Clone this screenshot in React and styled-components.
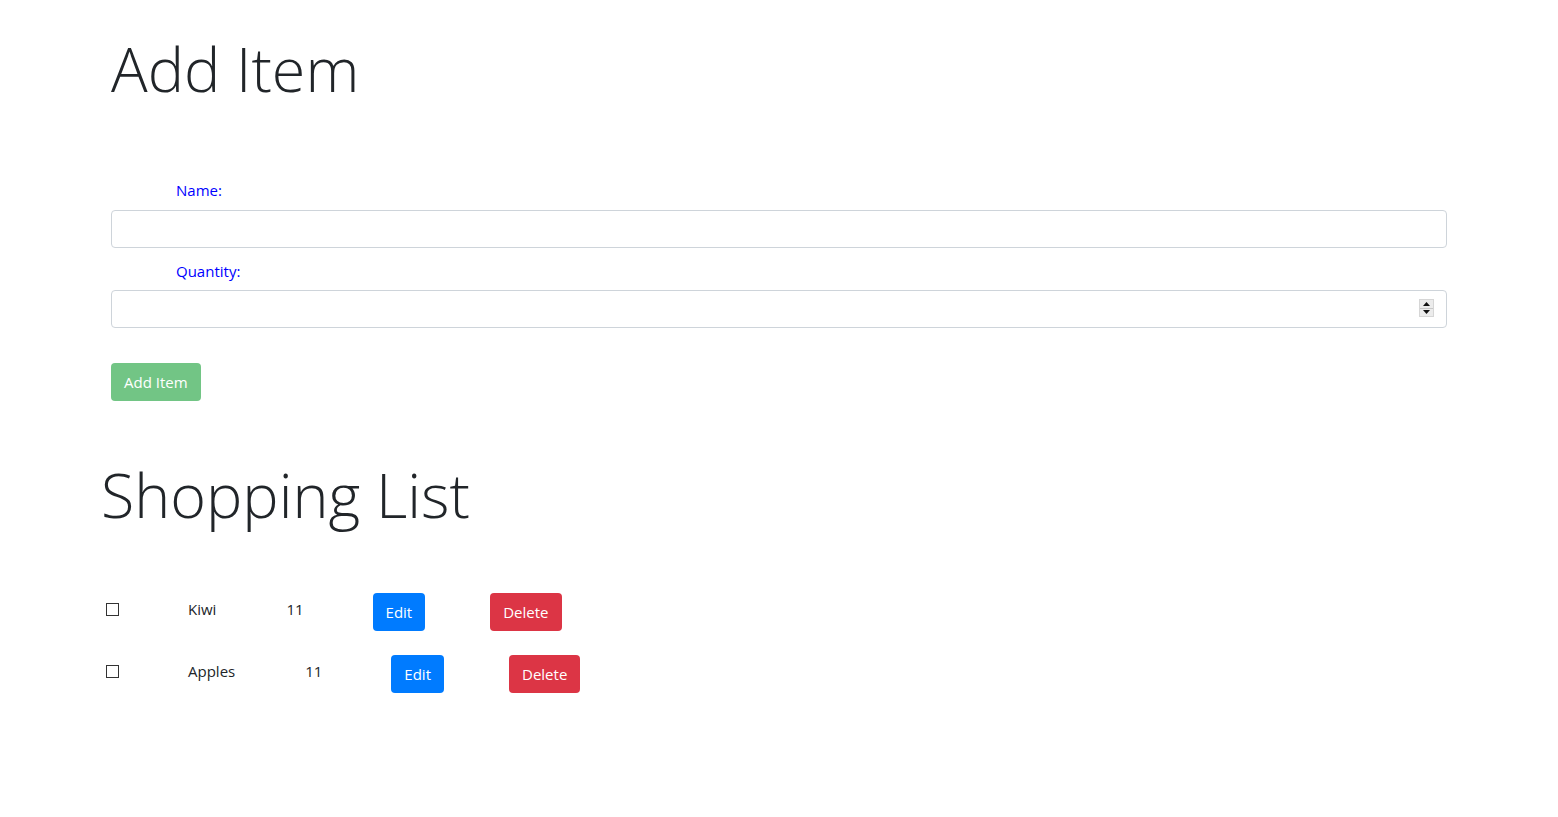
import React, { useState } from "react";
import styled, { createGlobalStyle } from "styled-components";

const GlobalStyle = createGlobalStyle`
  body {
    margin: 0;
    background: #fff;
    color: #212529;
    font-family: "Open Sans", "Noto Sans", "Liberation Sans", sans-serif;
    font-size: 16px;
    line-height: 1.5;
  }
`;

const Page = styled.div`
  width: 1336px;
  margin: 0 auto;
`;

const Title = styled.h1`
  font-size: 61px;
  font-weight: 300;
  line-height: 86px;
  margin: ${(props) => props.$margin || "0"};
`;

const Form = styled.form`
  display: flex;
  flex-direction: column;
  padding-top: 67px;
`;

const Label = styled.label`
  display: block;
  color: #0000ff;
  font-size: 15px;
  margin: 0 0 8px 65px;
`;

const Field = styled.div`
  position: relative;
  margin-bottom: ${(props) => props.$gap}px;
`;

const Input = styled.input`
  display: block;
  box-sizing: border-box;
  width: 100%;
  height: 38px;
  padding: 6px 12px;
  border: 1px solid #ced4da;
  border-radius: 4px;
  font: inherit;
  color: #495057;
  background: #fff;
  appearance: textfield;
  -moz-appearance: textfield;
  &::-webkit-inner-spin-button,
  &::-webkit-outer-spin-button {
    -webkit-appearance: none;
    margin: 0;
  }
`;

const Spinner = styled.span`
  position: absolute;
  right: 13px;
  top: 9px;
  width: 15px;
  height: 18px;
  display: flex;
  flex-direction: column;
  background: #ececec;
  border: 1px solid #d6d6d6;
  box-sizing: border-box;
`;

const SpinHalf = styled.span`
  flex: 1;
  display: flex;
  align-items: center;
  justify-content: center;
  border-top: ${(props) => (props.$bottom ? "1px solid #c8c8c8" : "none")};
`;

const Button = styled.button`
  font: inherit;
  font-size: 15px;
  line-height: 1.5;
  height: 38px;
  padding: 0 12px;
  border: 1px solid transparent;
  border-radius: 4px;
  color: #fff;
  background: ${(props) => props.$bg};
  opacity: ${(props) => (props.disabled ? 0.65 : 1)};
  margin-right: ${(props) => props.$gap || 0}px;
  cursor: pointer;
`;

const SubmitRow = styled.div`
  margin-top: 17px;
`;

const ListSection = styled.section`
  margin-left: -10px;
`;

const Row = styled.div`
  display: flex;
  align-items: center;
  height: 38px;
  margin-bottom: 24px;
  font-size: 15px;
`;

const Check = styled.span`
  box-sizing: border-box;
  width: 13px;
  height: 13px;
  border: 1px solid #333;
  margin: -6px 69px 0 5px;
  flex-shrink: 0;
`;

const Cell = styled.span`
  margin-right: ${(props) => props.$gap}px;
  margin-top: -5px;
`;

const Arrow = ({ up }) => (
  <svg width="7" height="4" viewBox="0 0 7 4">
    <path d={up ? "M0 4 L3.5 0 L7 4 Z" : "M0 0 L3.5 4 L7 0 Z"} fill="#111" />
  </svg>
);

const items = [
  { name: "Kiwi", qty: 11 },
  { name: "Apples", qty: 11 },
];

export default function App() {
  const [name, setName] = useState("");
  const [qty, setQty] = useState("");

  return (
    <>
      <GlobalStyle />
      <Page>
        <Title $margin="26px 0 0 0">Add Item</Title>
        <Form onSubmit={(e) => e.preventDefault()}>
          <Label htmlFor="name">Name:</Label>
          <Field $gap={12}>
            <Input id="name" value={name} onChange={(e) => setName(e.target.value)} />
          </Field>
          <Label htmlFor="qty">Quantity:</Label>
          <Field $gap={18}>
            <Input id="qty" type="number" value={qty} onChange={(e) => setQty(e.target.value)} />
            <Spinner>
              <SpinHalf><Arrow up /></SpinHalf>
              <SpinHalf $bottom><Arrow /></SpinHalf>
            </Spinner>
          </Field>
          <SubmitRow>
            <Button type="submit" $bg="#28a745" disabled>Add Item</Button>
          </SubmitRow>
        </Form>

        <ListSection>
          <Title $margin="51px 0 55px 0">Shopping List</Title>
          {items.map((item) => (
            <Row key={item.name}>
              <Check />
              <Cell $gap={70}>{item.name}</Cell>
              <Cell $gap={69}>{item.qty}</Cell>
              <Button $bg="#007bff" $gap={65}>Edit</Button>
              <Button $bg="#dc3545">Delete</Button>
            </Row>
          ))}
        </ListSection>
      </Page>
    </>
  );
}
